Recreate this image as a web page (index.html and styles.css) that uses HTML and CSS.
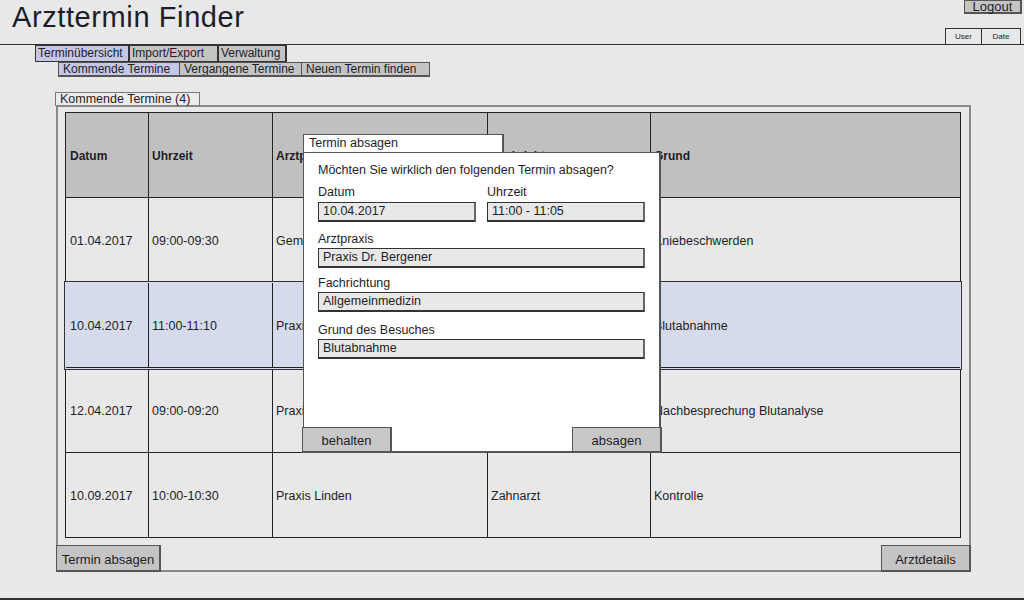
FILE: index.html
```html
<!DOCTYPE html>
<html lang="de">
<head>
<meta charset="utf-8">
<title>Arzttermin Finder</title>
<link rel="stylesheet" href="styles.css">
</head>
<body>
<div class="page">
  <header class="header">
    <h1 class="title">Arzttermin Finder</h1>
    <div class="header-right">
      <button class="btn logout">Logout</button>
      <div class="userdate">
        <span class="mini">User</span>
        <span class="mini">Date</span>
      </div>
    </div>
  </header>

  <nav class="tabs tabs-main">
    <span class="tab active t-uebersicht">Terminübersicht</span>
    <span class="tab t-import">Import/Export</span>
    <span class="tab t-verw">Verwaltung</span>
  </nav>
  <nav class="tabs tabs-sub">
    <span class="tab active t-kommend">Kommende Termine</span>
    <span class="tab t-vergangen">Vergangene Termine</span>
    <span class="tab t-neu">Neuen Termin finden</span>
  </nav>

  <section class="panel-wrap">
    <div class="panel-tab">Kommende Termine (4)</div>
    <div class="panel">
      <div class="grid">
        <div class="row head">
          <div class="cell">Datum</div>
          <div class="cell">Uhrzeit</div>
          <div class="cell">Arztpraxis</div>
          <div class="cell">Fachrichtung</div>
          <div class="cell">Grund</div>
        </div>
        <div class="row">
          <div class="cell">01.04.2017</div>
          <div class="cell">09:00-09:30</div>
          <div class="cell">Gemeinschaftspraxis</div>
          <div class="cell">Orthopädie</div>
          <div class="cell">Kniebeschwerden</div>
        </div>
        <div class="row selected">
          <div class="cell">10.04.2017</div>
          <div class="cell">11:00-11:10</div>
          <div class="cell">Praxis Dr. Bergener</div>
          <div class="cell">Allgemeinmedizin</div>
          <div class="cell">Blutabnahme</div>
        </div>
        <div class="row">
          <div class="cell">12.04.2017</div>
          <div class="cell">09:00-09:20</div>
          <div class="cell">Praxis Dr. Bergener</div>
          <div class="cell">Allgemeinmedizin</div>
          <div class="cell">Nachbesprechung Blutanalyse</div>
        </div>
        <div class="row last">
          <div class="cell">10.09.2017</div>
          <div class="cell">10:00-10:30</div>
          <div class="cell">Praxis Linden</div>
          <div class="cell">Zahnarzt</div>
          <div class="cell">Kontrolle</div>
        </div>
      </div>
      <div class="panel-actions">
        <button class="btn big">Termin absagen</button>
        <button class="btn big">Arztdetails</button>
      </div>
    </div>
  </section>

  <div class="dialog">
    <div class="dialog-tab">Termin absagen</div>
    <div class="dialog-body">
      <p class="question">Möchten Sie wirklich den folgenden Termin absagen?</p>
      <div class="field-row">
        <div class="field half">
          <label>Datum</label>
          <div class="input">10.04.2017</div>
        </div>
        <div class="field half">
          <label>Uhrzeit</label>
          <div class="input">11:00 - 11:05</div>
        </div>
      </div>
      <div class="field">
        <label>Arztpraxis</label>
        <div class="input">Praxis Dr. Bergener</div>
      </div>
      <div class="field">
        <label>Fachrichtung</label>
        <div class="input">Allgemeinmedizin</div>
      </div>
      <div class="field gap">
        <label>Grund des Besuches</label>
        <div class="input">Blutabnahme</div>
      </div>
      <div class="dialog-actions">
        <button class="btn dbtn">behalten</button>
        <button class="btn dbtn">absagen</button>
      </div>
    </div>
  </div>
</div>
</body>
</html>
```

FILE: styles.css
```css
* { box-sizing: border-box; }
html, body { margin: 0; padding: 0; }
body {
  background: #e8e8e8;
  font-family: "Liberation Sans", Arial, sans-serif;
  font-size: 12.5px;
  color: #1e1e28;
}
.page {
  position: relative;
  width: 1024px;
  height: 600px;
  border-bottom: 2px solid #333;
  overflow: hidden;
}

/* header */
.header {
  display: flex;
  justify-content: space-between;
  height: 45px;
  border-bottom: 1px solid #333;
}
.title {
  margin: 0;
  padding: 1px 0 0 12px;
  font-weight: normal;
  font-size: 29px;
  line-height: 33px;
  letter-spacing: 0.6px;
}
.header-right {
  display: flex;
  flex-direction: column;
  align-items: flex-end;
  justify-content: space-between;
  padding-right: 2px;
}
.btn {
  font-family: inherit;
  color: #1e1e28;
  background: #c4c4c4;
  border: 1px solid #555;
  border-right-width: 2px;
  border-bottom-width: 2px;
  padding: 0;
  cursor: pointer;
}
.logout {
  width: 58px;
  height: 14px;
  font-size: 13px;
  line-height: 11px;
}
.userdate { display: flex; margin-right: 1px; }
.mini {
  width: 37px;
  height: 16px;
  border: 1px solid #333;
  border-bottom: none;
  font-size: 8px;
  line-height: 15px;
  text-align: center;
}
.mini + .mini { width: 39px; border-left: none; }

/* tabs */
.tabs { display: flex; }
.tabs-main { margin-left: 35px; height: 17px; }
.tabs-sub { margin-left: 58px; height: 15px; }
.tab {
  border: 1px solid #333;
  border-right-width: 2px;
  background: #c4c4c4;
  padding: 0 2px;
  font-size: 12px;
  line-height: 15px;
  white-space: nowrap;
  overflow: hidden;
}
.tabs-sub .tab { line-height: 13px; padding-left: 4px; border-right-width: 1px; border-bottom-width: 2px; border-color: #555; }
.tab + .tab { border-left: none; }
.tab.active { background: #c6c6e6; }
.t-uebersicht { width: 95px; }
.t-import { width: 89px; }
.t-verw { width: 68px; }
.t-kommend { width: 122px; }
.t-vergangen { width: 122px; }
.t-neu { width: 128px; }

/* panel */
.panel-wrap {
  margin: 15px 0 0 55px;
  width: 916px;
}
.panel-tab {
  width: 145px;
  height: 14px;
  border: 1px solid #777;
  border-bottom: none;
  background: #ececec;
  padding-left: 4px;
  line-height: 13px;
}
.panel {
  margin-left: 1px;
  margin-top: -1px;
  width: 915px;
  height: 467px;
  border: 2px solid #888;
  padding: 5px 8px 0 7px;
  display: flex;
  flex-direction: column;
  justify-content: space-between;
}
.grid {
  border: 1px solid #222;
  width: 896px;
}
.row {
  display: grid;
  grid-template-columns: 83px 124px 215px 163px 1fr;
  height: 85px;
  border-bottom: 1px solid #222;
}
.row.last { border-bottom: none; height: 84px; }
.cell {
  display: flex;
  align-items: center;
  padding-left: 3px;
  padding-top: 1px;
  border-right: 1px solid #222;
  white-space: nowrap;
  overflow: hidden;
}
.cell:first-child { padding-left: 4px; }
.cell:last-child { border-right: none; }
.row.head { background: #c0c0c0; }
.row.head .cell { font-weight: bold; font-size: 12px; }
.row.selected {
  background: #d6dbec;
  box-shadow: 0 0 0 1px #d6dbec, 0 0 0 2px #333;
  position: relative;
}
.panel-actions {
  display: flex;
  justify-content: space-between;
  margin: 0 -10px -2px -9px;
}
.btn.big {
  width: 105px;
  height: 27px;
  font-size: 13px;
  padding-top: 2px;
}
.btn.big + .btn.big { width: 90px; }

/* dialog */
.dialog {
  position: absolute;
  left: 303px;
  top: 134px;
  width: 358px;
}
.dialog-tab {
  width: 201px;
  height: 18px;
  background: #fff;
  border: 1px solid #555;
  border-bottom: none;
  border-right-width: 2px;
  padding-left: 5px;
  line-height: 17px;
}
.dialog-body {
  position: relative;
  width: 358px;
  height: 301px;
  background: #fff;
  border: 1px solid #555;
  border-right-width: 2px;
  border-bottom-width: 2px;
  padding: 9px 14px 0 14px;
}
.question { margin: 0 0 5px 0; line-height: 17px; }
.field-row { display: flex; justify-content: space-between; }
.field.half { width: 158px; }
.field label { display: block; line-height: 17px; }
.input {
  height: 20px;
  background: #e8e8e8;
  border: 1px solid #333;
  border-right: 2px solid #666;
  border-bottom: 2px solid #333;
  padding-left: 4px;
  line-height: 17px;
  margin-bottom: 7px;
}
.half .input { margin-top: 1px; margin-bottom: 9px; }
.field.gap { margin-top: 10px; }
.dialog-actions {
  position: absolute;
  left: -2px;
  right: -3px;
  bottom: -2px;
  display: flex;
  justify-content: space-between;
}
.btn.dbtn {
  width: 90px;
  height: 26px;
  font-size: 13px;
  background: #c8c8c8;
  padding-top: 2px;
}
```
